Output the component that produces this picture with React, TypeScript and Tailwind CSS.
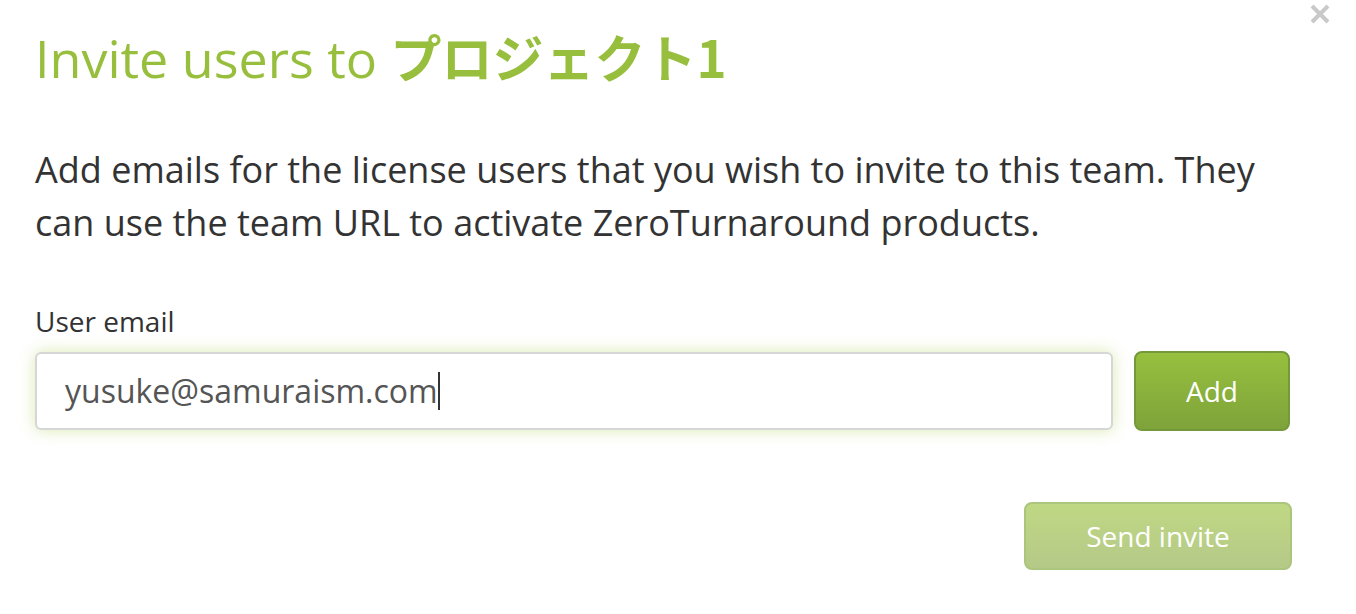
import React from "react";

export default function App() {
  return (
    <div
      className="relative w-[1356px] h-[614px] bg-white overflow-hidden"
      style={{ fontFamily: '"Open Sans", "Noto Sans CJK JP", sans-serif' }}
    >
      <button className="absolute left-[1309px] top-[4px] w-[22px] h-[20px]" aria-label="Close">
        <svg width="22" height="20" viewBox="0 0 22 20">
          <path d="M3 2 L19 18 M19 2 L3 18" stroke="#c9c9c9" strokeWidth="4" strokeLinecap="butt" />
        </svg>
      </button>
      <div className="pl-[35px] pr-[64px] pt-[20px]">
        <h1 className="text-[52px] leading-[72px] text-[#97bf3d] font-normal">
          Invite users to{" "}
          <span
            className="font-bold text-[51px]"
            style={{ fontFamily: '"Noto Sans CJK JP", "Open Sans", sans-serif' }}
          >
            プロジェクト1
          </span>
        </h1>
        <p className="mt-[49px] text-[36px] leading-[53px] text-[#333333]">
          Add emails for the license users that you wish to invite to this team. They can use the team URL to
          activate ZeroTurnaround products.
        </p>
        <label className="block mt-[54px] text-[28px] leading-[36px] text-[#333333]">User email</label>
        <div className="mt-[12px] flex items-center gap-[21px]">
          <div className="w-[1078px] h-[78px] rounded-[6px] border-2 border-[#d6d6d6] bg-white shadow-[0_0_16px_rgba(160,200,60,0.4)] flex items-center px-[28px]">
            <span className="text-[32px] text-[#555555]">yusuke@samuraism.com</span>
            <span className="w-[2px] h-[38px] bg-[#333333]" />
          </div>
          <button className="w-[156px] h-[80px] rounded-[8px] border-2 border-[#73993a] bg-gradient-to-b from-[#97c03e] to-[#7ea33a] text-white text-[28px]">
            Add
          </button>
        </div>
        <div className="mt-[71px] flex justify-end">
          <button className="w-[268px] h-[68px] rounded-[8px] border-2 border-[#abc57d] bg-gradient-to-b from-[#bfd883] to-[#b5c988] text-white text-[28px]">
            Send invite
          </button>
        </div>
      </div>
    </div>
  );
}
